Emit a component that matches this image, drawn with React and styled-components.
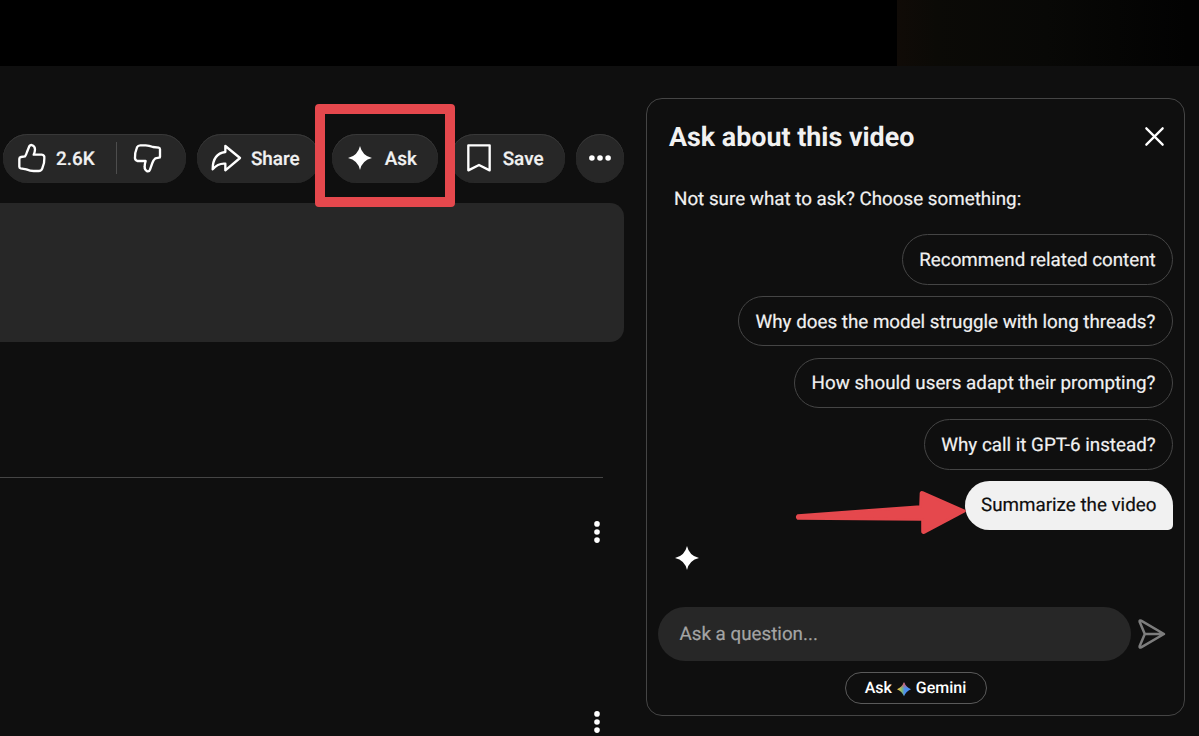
import React from "react";
import styled, { createGlobalStyle } from "styled-components";

const GlobalStyle = createGlobalStyle`
  *, *::before, *::after { box-sizing: border-box; }
  body {
    margin: 0;
    background: #0f0f0f;
    color: #f1f1f1;
    font-family: Roboto, "Liberation Sans", sans-serif;
    text-rendering: geometricPrecision;
    -webkit-text-stroke: 0.2px currentColor;
    overflow: hidden;
  }
  button { font: inherit; color: inherit; margin: 0; text-rendering: inherit; }
  svg { display: block; flex: none; overflow: visible; }
`;

const Page = styled.div`
  position: relative;
  width: 1199px;
  height: 736px;
  overflow: hidden;
  background: #0f0f0f;
`;

const VideoStrip = styled.div`
  display: flex;
  justify-content: flex-end;
  height: 66px;
  background: #000;
`;

const AmbientEdge = styled.div`
  width: 302px;
  background: linear-gradient(90deg, #100b07 0, #0b0a06 40px, #080806 150px, #020202 290px);
`;

const Columns = styled.div`
  display: flex;
  gap: 22px;
`;

const Primary = styled.main`
  width: 624px;
  padding-top: 68px;
`;

const Actions = styled.div`
  display: flex;
  gap: 11.4px;
  padding-left: 3px;
  height: 48.5px;
`;

const Pill = styled.button`
  display: flex;
  align-items: center;
  flex: none;
  width: ${(p) => p.$width}px;
  height: 48.5px;
  padding: 0 0 0 ${(p) => p.$inset}px;
  gap: ${(p) => p.$gap || 0}px;
  border: 0;
  border-radius: 25px;
  background: #272727;
  box-shadow: inset 0 1px 0.5px #383838, inset 0 0 1px #343434;
  font-size: 18.9px;
  font-weight: 500;
  line-height: 24px;
`;

const PillLabel = styled.span`
  padding-top: 1px;
  white-space: nowrap;
`;

const CountLabel = styled(PillLabel)`
  width: 39px;
  margin-left: 9px;
`;

const Divider = styled.span`
  width: 1px;
  height: 32px;
  margin: 0 16px 0 20.5px;
  background: #4d4d4d;
`;

const Description = styled.section`
  height: 139px;
  margin-top: 20.5px;
  border-radius: 0 14px 14px 0;
  background: #272727;
`;

const Comments = styled.section`
  width: 603px;
  margin-top: 134.5px;
  border-top: 1px solid #454545;
`;

const Comment = styled.article`
  display: flex;
  justify-content: flex-end;
  height: 190.7px;
  padding: 43px 3px 0 0;
`;

const Panel = styled.aside`
  display: flex;
  flex-direction: column;
  width: 539px;
  height: 617.5px;
  margin-top: 32px;
  border: 1px solid #454545;
  border-radius: 16px;
  padding: 0 11px;
`;

const PanelHeader = styled.header`
  display: flex;
  align-items: center;
  justify-content: space-between;
  height: 75px;
  padding: 0 9.5px 0 11px;
`;

const Title = styled.h2`
  margin: 0;
  font-size: 26.85px;
  font-weight: 700;
  line-height: 32px;
  white-space: nowrap;
  -webkit-text-stroke: 0;
`;

const IconButton = styled.button`
  display: flex;
  padding: 0;
  border: 0;
  background: none;
`;

const Prompt = styled.p`
  margin: 13px 0 0 16px;
  font-size: 18.8px;
  line-height: 24px;
  white-space: nowrap;
`;

const Suggestions = styled.div`
  display: flex;
  flex-direction: column;
  align-items: flex-end;
  gap: 11.3px;
  margin-top: 23px;
`;

const Chip = styled.button`
  display: flex;
  align-items: center;
  justify-content: center;
  width: ${(p) => p.$width}px;
  height: 50.5px;
  padding: 1px 0 0;
  border: 1px solid #454545;
  border-radius: 26px;
  background: transparent;
  font-size: 18.8px;
  line-height: 24px;
  white-space: nowrap;
`;

const SelectedChip = styled(Chip)`
  height: 48.5px;
  padding: 0;
  border: 0;
  border-radius: 25px 25px 5px 25px;
  background: #f1f1f1;
  color: #0f0f0f;
`;

const Reply = styled.div`
  margin: 16.5px 0 0 17px;
`;

const Composer = styled.div`
  display: flex;
  align-items: center;
  gap: 7.5px;
  margin-top: 37px;
`;

const Input = styled.div`
  width: 472.5px;
  height: 53.5px;
  padding-left: 21.5px;
  border-radius: 27px;
  background: #272727;
  color: #a4a4a4;
  font-size: 18.8px;
  line-height: 54px;
`;

const GeminiButton = styled.button`
  display: flex;
  align-items: center;
  justify-content: center;
  align-self: center;
  gap: 5px;
  width: 142px;
  height: 32px;
  margin: 11px 0 0;
  padding: 0;
  border: 1px solid #5a5a5a;
  border-radius: 17px;
  background: transparent;
  color: #fff;
  font-size: 16px;
  font-weight: 500;
  line-height: 20px;
  -webkit-text-stroke: 0;
`;

const HighlightBox = styled.div`
  position: absolute;
  left: 315px;
  top: 104px;
  width: 140px;
  height: 103px;
  border: 10px solid #e5484d;
  border-radius: 4px;
`;

const Pointer = styled.svg`
  position: absolute;
  left: 794px;
  top: 488px;
`;

const outline = {
  fill: "none",
  stroke: "#fff",
  strokeWidth: 7,
  strokeLinejoin: "round",
  strokeLinecap: "round",
};

const ThumbUp = () => (
  <svg width="30" height="30" viewBox="51 142 90 90" {...outline}>
    <path d="M63 184L75 182Q78 179 81 169L87 154Q89 148 95 148Q105 151 105 161Q105 169 101 177L125 177Q134 178 133 187Q134 202 127 218Q124 226 116 226L101 226Q91 226 79 221L62 218Q58 217 58 213L58 189Q58 185 63 184Z" />
  </svg>
);

const ThumbDown = () => (
  <svg width="30" height="30" viewBox="399 144 90 90" {...outline}>
    <path d="M477 188L466 190Q461 194 457 204L450 224Q448 230 442 229Q433 225 434 215Q434 207 437 198L412 198Q404 195 405 188Q404 174 411 157Q414 151 421 151L437 151Q447 151 459 156L476 158Q480 159 480 163L480 185Q480 188 477 188Z" />
  </svg>
);

const ShareIcon = () => (
  <svg width="30" height="30" viewBox="632 143 90 90" {...outline}>
    <path d="M675 152L719 188L675 225L675 205Q653 203 637 222Q637 175 675 170Z" />
  </svg>
);

const Bookmark = () => (
  <svg width="24" height="28" viewBox="471 148 72 84" {...outline}>
    <path d="M475 152H539V227L507 211L475 227Z" />
  </svg>
);

const Sparkle = ({ size = 24, fill = "#fff" }) => (
  <svg width={size} height={size} viewBox="0 0 24 24">
    <path fill={fill} d="M12 0Q14.2 9.8 24 12Q14.2 14.2 12 24Q9.8 14.2 0 12Q9.8 9.8 12 0Z" />
  </svg>
);

const Dots = ({ vertical }) => (
  <svg
    width={vertical ? 6 : 22}
    height={vertical ? 22 : 6}
    viewBox={vertical ? "0 0 6 22" : "0 0 22 6"}
    fill="#fff"
  >
    {[2.9, 11, 19.1].map((n) => (
      <circle key={n} cx={vertical ? 3 : n} cy={vertical ? n : 3} r="2.8" />
    ))}
  </svg>
);

const Close = () => (
  <svg width="19" height="19" viewBox="0 0 20 20" fill="none" stroke="#fff" strokeWidth="2.4" strokeLinecap="round">
    <path d="M1.4 1.4L18.6 18.6M18.6 1.4L1.4 18.6" />
  </svg>
);

const Send = () => (
  <svg width="28" height="30" viewBox="0 0 28 30" fill="none" stroke="#7d7d7d" strokeWidth="2.5" strokeLinejoin="round">
    <path d="M1.6 2.8Q1.3 1 3.1 1.7L26 15L3.1 28.3Q1.3 29 1.6 27.2L6.8 15ZM6.8 15H26" />
  </svg>
);

const GeminiStar = () => (
  <svg width="14" height="14" viewBox="0 -2 24 24">
    <defs>
      <linearGradient id="gemBase" x1="0" x2="1" y1="0" y2="0">
        <stop offset="0.1" stopColor="#e8c34a" />
        <stop offset="0.35" stopColor="#7db872" />
        <stop offset="0.55" stopColor="#4c8df0" />
      </linearGradient>
      <linearGradient id="gemTop" x1="0" x2="0" y1="0" y2="1">
        <stop offset="0.05" stopColor="#f0525a" />
        <stop offset="0.45" stopColor="#f0525a" stopOpacity="0" />
      </linearGradient>
    </defs>
    <path fill="url(#gemBase)" d="M12 0Q15.5 8.5 24 12Q15.5 15.5 12 24Q8.5 15.5 0 12Q8.5 8.5 12 0Z" />
    <path fill="url(#gemTop)" d="M12 0Q15.5 8.5 24 12Q15.5 15.5 12 24Q8.5 15.5 0 12Q8.5 8.5 12 0Z" />
  </svg>
);

const suggestions = [
  { text: "Recommend related content", width: 271 },
  { text: "Why does the model struggle with long threads?", width: 435 },
  { text: "How should users adapt their prompting?", width: 379 },
  { text: "Why call it GPT-6 instead?", width: 249 },
];

export default function App() {
  return (
    <>
      <GlobalStyle />
      <Page>
        <VideoStrip>
          <AmbientEdge />
        </VideoStrip>
        <Columns>
          <Primary>
            <Actions>
              <Pill as="div" $width={183} $inset={14}>
                <ThumbUp />
                <CountLabel>2.6K</CountLabel>
                <Divider />
                <ThumbDown />
              </Pill>
              <Pill $width={123} $inset={13.5} $gap={10}>
                <ShareIcon />
                <PillLabel>Share</PillLabel>
              </Pill>
              <Pill $width={106.5} $inset={16.5} $gap={12.5}>
                <Sparkle />
                <PillLabel>Ask</PillLabel>
              </Pill>
              <Pill $width={115} $inset={17} $gap={12}>
                <Bookmark />
                <PillLabel>Save</PillLabel>
              </Pill>
              <Pill $width={48} $inset={13}>
                <Dots />
              </Pill>
            </Actions>
            <Description />
            <Comments>
              <Comment>
                <Dots vertical />
              </Comment>
              <Comment>
                <Dots vertical />
              </Comment>
            </Comments>
          </Primary>
          <Panel>
            <PanelHeader>
              <Title>Ask about this video</Title>
              <IconButton aria-label="Close">
                <Close />
              </IconButton>
            </PanelHeader>
            <Prompt>Not sure what to ask? Choose something:</Prompt>
            <Suggestions>
              {suggestions.map((s) => (
                <Chip key={s.text} $width={s.width}>{s.text}</Chip>
              ))}
              <SelectedChip $width={208.5}>Summarize the video</SelectedChip>
            </Suggestions>
            <Reply>
              <Sparkle />
            </Reply>
            <Composer>
              <Input>Ask a question...</Input>
              <IconButton aria-label="Send">
                <Send />
              </IconButton>
            </Composer>
            <GeminiButton>
              <span>Ask</span>
              <GeminiStar />
              <span>Gemini</span>
            </GeminiButton>
          </Panel>
        </Columns>
        <HighlightBox />
        <Pointer width="176" height="48" viewBox="794 488 176 48">
          <path
            d="M798 515.5L920.5 506.5L921 493Q921 492 922.5 492.5L964.5 511L924 532.5Q922.5 533 922.5 531.5L922.5 519.5L798 518.5Q796.5 517 798 515.5Z"
            fill="#e5484d"
            stroke="#e5484d"
            strokeWidth="2.6"
            strokeLinejoin="round"
          />
        </Pointer>
      </Page>
    </>
  );
}
